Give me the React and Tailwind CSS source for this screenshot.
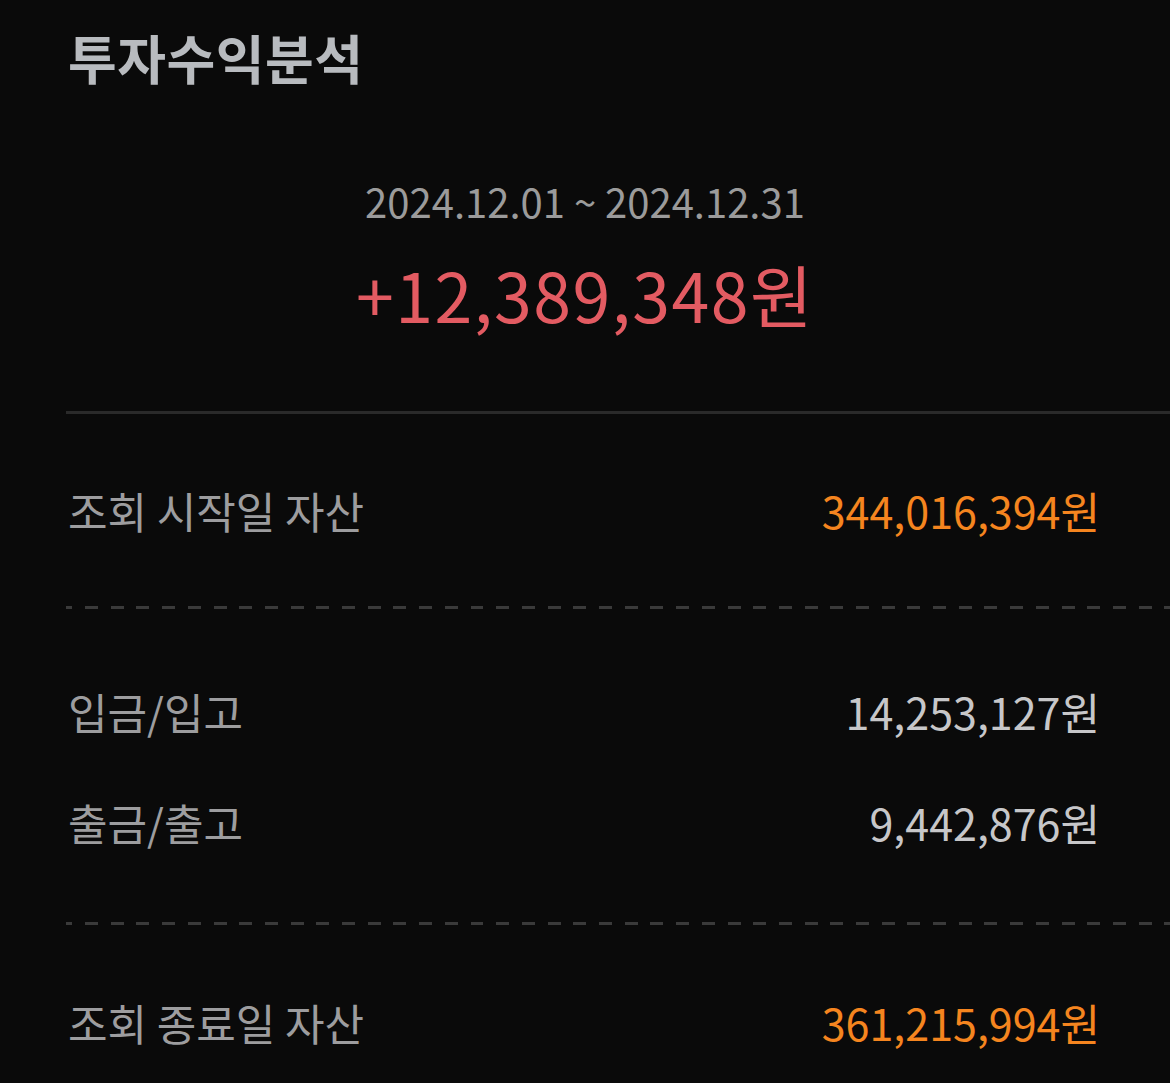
const FONT = "font-['Noto_Sans_CJK_KR','Noto_Sans',sans-serif]";

const DASH =
  'h-[3px] bg-[repeating-linear-gradient(to_right,#3a3a3a_0,#3a3a3a_6.3px,transparent_6.3px,transparent_19px,#3a3a3a_19px,#3a3a3a_25.7px)]';

function Row({ label, value, tone = 'plain', className = '' }) {
  const valueColor = tone === 'accent' ? 'text-[#f5851f]' : 'text-[#c7c7c9]';
  return (
    <div className={`flex items-center justify-between pl-[2px] pr-[70px] ${className}`}>
      <span className="text-[43px] leading-none text-[#9d9d9f]">{label}</span>
      <span className={`text-[43px] leading-none ${valueColor}`}>{value}</span>
    </div>
  );
}

export default function App() {
  return (
    <main className={`min-h-screen w-full bg-[#0a0a0a] ${FONT}`}>
      <h1 className="pl-[68px] pt-[31px] text-[53px] font-bold leading-none tracking-[0.5px] text-[#b8bbbf]">
        투자수익분석
      </h1>

      <section className="flex flex-col items-center">
        <p className="mt-[97px] text-[40px] leading-none text-[#9b9b9b]">2024.12.01 ~ 2024.12.31</p>
        <p className="mt-[39px] text-[68px] leading-none tracking-[1.5px] text-[#e35b62]">+12,389,348원</p>
      </section>

      <div className="pl-[66px]">
        <div className="mt-[83px] h-[3px] bg-[#2a2a2a]" />

        <Row label="조회 시작일 자산" value="344,016,394원" tone="accent" className="h-[192px]" />

        <div className={DASH} />

        <div className="flex flex-col pt-[81px]">
          <Row label="입금/입고" value="14,253,127원" className="h-[42px]" />
          <Row label="출금/출고" value="9,442,876원" className="mt-[69px] h-[42px]" />
        </div>

        <div className={`mt-[79px] ${DASH}`} />

        <Row label="조회 종료일 자산" value="361,215,994원" tone="accent" className="h-[194px]" />
      </div>
    </main>
  );
}
